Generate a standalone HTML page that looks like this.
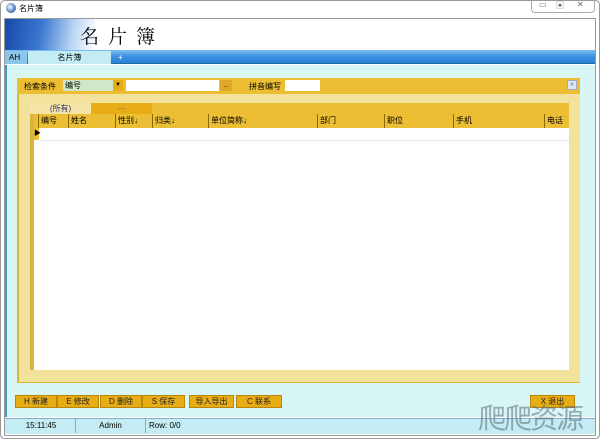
<!DOCTYPE html><html><head><meta charset="utf-8"><style>
*{margin:0;padding:0;box-sizing:border-box}
body{width:600px;height:439px;background:#f0f0f0;font-family:"Liberation Sans","Noto Sans CJK SC",sans-serif;font-size:8px;position:relative;overflow:hidden;color:#000}
.a{position:absolute}
.btn{position:absolute;top:395px;height:13px;background:#e8ac14;border:1px solid #b8860b;font-size:8px;text-align:center;line-height:11px;color:#222}
.h{position:absolute;top:0;height:14px;line-height:14px;font-size:8px;border-left:1px solid #8a6a00;padding-left:2px}
</style></head><body>
<div class="a" style="left:0;top:0;width:600px;height:439px;background:#fff;border:1px solid #999;border-radius:5px"></div>
<div class="a" style="left:6px;top:3px;width:10px;height:10px;border-radius:50%;background:radial-gradient(circle at 40% 40%,#fff,#4a7fc0 60%,#a33)"></div>
<div class="a" style="left:19px;top:3px;font-size:8px">名片簿</div>
<div class="a" style="left:531px;top:0;width:64px;height:13px;border:1px solid #aaa;border-top:none;border-radius:0 0 4px 4px;font-size:8px;color:#666"><span class="a" style="left:7px;top:0">▭</span><span class="a" style="left:24px;top:0">▣</span><span class="a" style="left:45px;top:0">✕</span></div>
<div class="a" style="left:4px;top:18px;width:592px;height:418px;border:1px solid #999;background:#fff"></div>
<div class="a" style="left:5px;top:19px;width:90px;height:31px;background:linear-gradient(100deg,#1848a8,#3a78d0 40%,#bcd8f4 75%,#fff)"></div>
<div class="a" style="left:80px;top:22px;font-size:19px;font-family:'Noto Serif CJK SC',serif;letter-spacing:9px">名片簿</div>
<div class="a" style="left:5px;top:50px;width:590px;height:14px;background:linear-gradient(#7cc0f0,#3a90e0 50%,#2a80d8);border-bottom:1px solid #1c6a9a"></div>
<div class="a" style="left:5px;top:51px;width:22px;height:13px;background:#8cc6ec;font-size:8px;line-height:13px;padding-left:4px">AH</div>
<div class="a" style="left:28px;top:51px;width:83px;height:13px;background:#c4ecf4;font-size:8px;line-height:13px;text-align:center">名片簿</div>
<div class="a" style="left:118px;top:51px;font-size:8px;line-height:13px;color:#fff">+</div>
<div class="a" style="left:5px;top:65px;width:590px;height:352px;background:#d8f6f6;border-left:2px solid #3aa0c8"></div>
<div class="a" style="left:17px;top:78px;width:563px;height:16px;background:#ecbe34"></div>
<div class="a" style="left:24px;top:81px">检索条件</div>
<div class="a" style="left:63px;top:80px;width:60px;height:11px;background:#cfe8c8;padding-left:2px;line-height:11px">编号</div>
<div class="a" style="left:113px;top:80px;width:10px;height:11px;background:#e8ac14;text-align:center;line-height:11px;font-size:6px">▼</div>
<div class="a" style="left:126px;top:80px;width:93px;height:11px;background:#fff"></div>
<div class="a" style="left:220px;top:80px;width:12px;height:11px;background:#e0a828;font-size:6px;text-align:center;line-height:13px">...</div>
<div class="a" style="left:249px;top:81px">拼音编写</div>
<div class="a" style="left:285px;top:80px;width:35px;height:11px;background:#fff"></div>
<div class="a" style="left:567px;top:80px;width:10px;height:10px;background:#dde8f4;border:1px solid #aab;color:#46a;font-size:7px;line-height:8px;text-align:center">»</div>
<div class="a" style="left:17px;top:94px;width:563px;height:289px;background:#f3e29c;border-left:2px solid #d8b440;border-bottom:1px solid #d8b440"></div>
<div class="a" style="left:30px;top:103px;width:539px;height:11px;background:#ecbe34"></div>
<div class="a" style="left:30px;top:103px;width:61px;height:11px;background:#f4e4a8;color:#336;text-align:center;line-height:11px">(所有)</div>
<div class="a" style="left:91px;top:103px;width:61px;height:11px;background:#e8ac14;color:#777;text-align:center;line-height:11px">---</div>
<div class="a" style="left:30px;top:114px;width:539px;height:256px;background:#fff;border-left:4px solid #d8b440"></div>
<div class="a" style="left:34px;top:114px;width:535px;height:14px;background:#ecbe34">
<div class="h" style="left:4px">编号</div><div class="h" style="left:34px">姓名</div><div class="h" style="left:81px">性别↓</div><div class="h" style="left:118px">归类↓</div><div class="h" style="left:174px">单位简称↓</div><div class="h" style="left:283px">部门</div><div class="h" style="left:350px">职位</div><div class="h" style="left:419px">手机</div><div class="h" style="left:510px">电话</div></div>
<div class="a" style="left:34px;top:128px;width:5px;height:12px;background:#ecbe34;font-size:7px;line-height:12px">▶</div>
<div class="a" style="left:39px;top:140px;width:530px;height:1px;background:#e4e4e4"></div>
<div class="btn" style="left:15px;width:42px">H 新建</div>
<div class="btn" style="left:57px;width:42px">E 修改</div>
<div class="btn" style="left:100px;width:42px">D 删除</div>
<div class="btn" style="left:142px;width:43px">S 保存</div>
<div class="btn" style="left:189px;width:45px">导入导出</div>
<div class="btn" style="left:236px;width:46px">C 联系</div>
<div class="btn" style="left:530px;width:45px">X 退出</div>
<div class="a" style="left:5px;top:418px;width:590px;height:16px;background:#c4ecf4;border-top:1px solid #8ac"></div>
<div class="a" style="left:7px;top:419px;width:69px;height:14px;border-right:1px solid #8ac;text-align:center;line-height:14px">15:11:45</div>
<div class="a" style="left:76px;top:419px;width:70px;height:14px;border-right:1px solid #8ac;text-align:center;line-height:14px">Admin</div>
<div class="a" style="left:149px;top:419px;line-height:14px">Row: 0/0</div>
<div class="a" style="left:478px;top:404px;font-size:28px;color:rgba(90,110,120,.55);letter-spacing:-2px;line-height:30px">爬爬资源</div>
</body></html>
